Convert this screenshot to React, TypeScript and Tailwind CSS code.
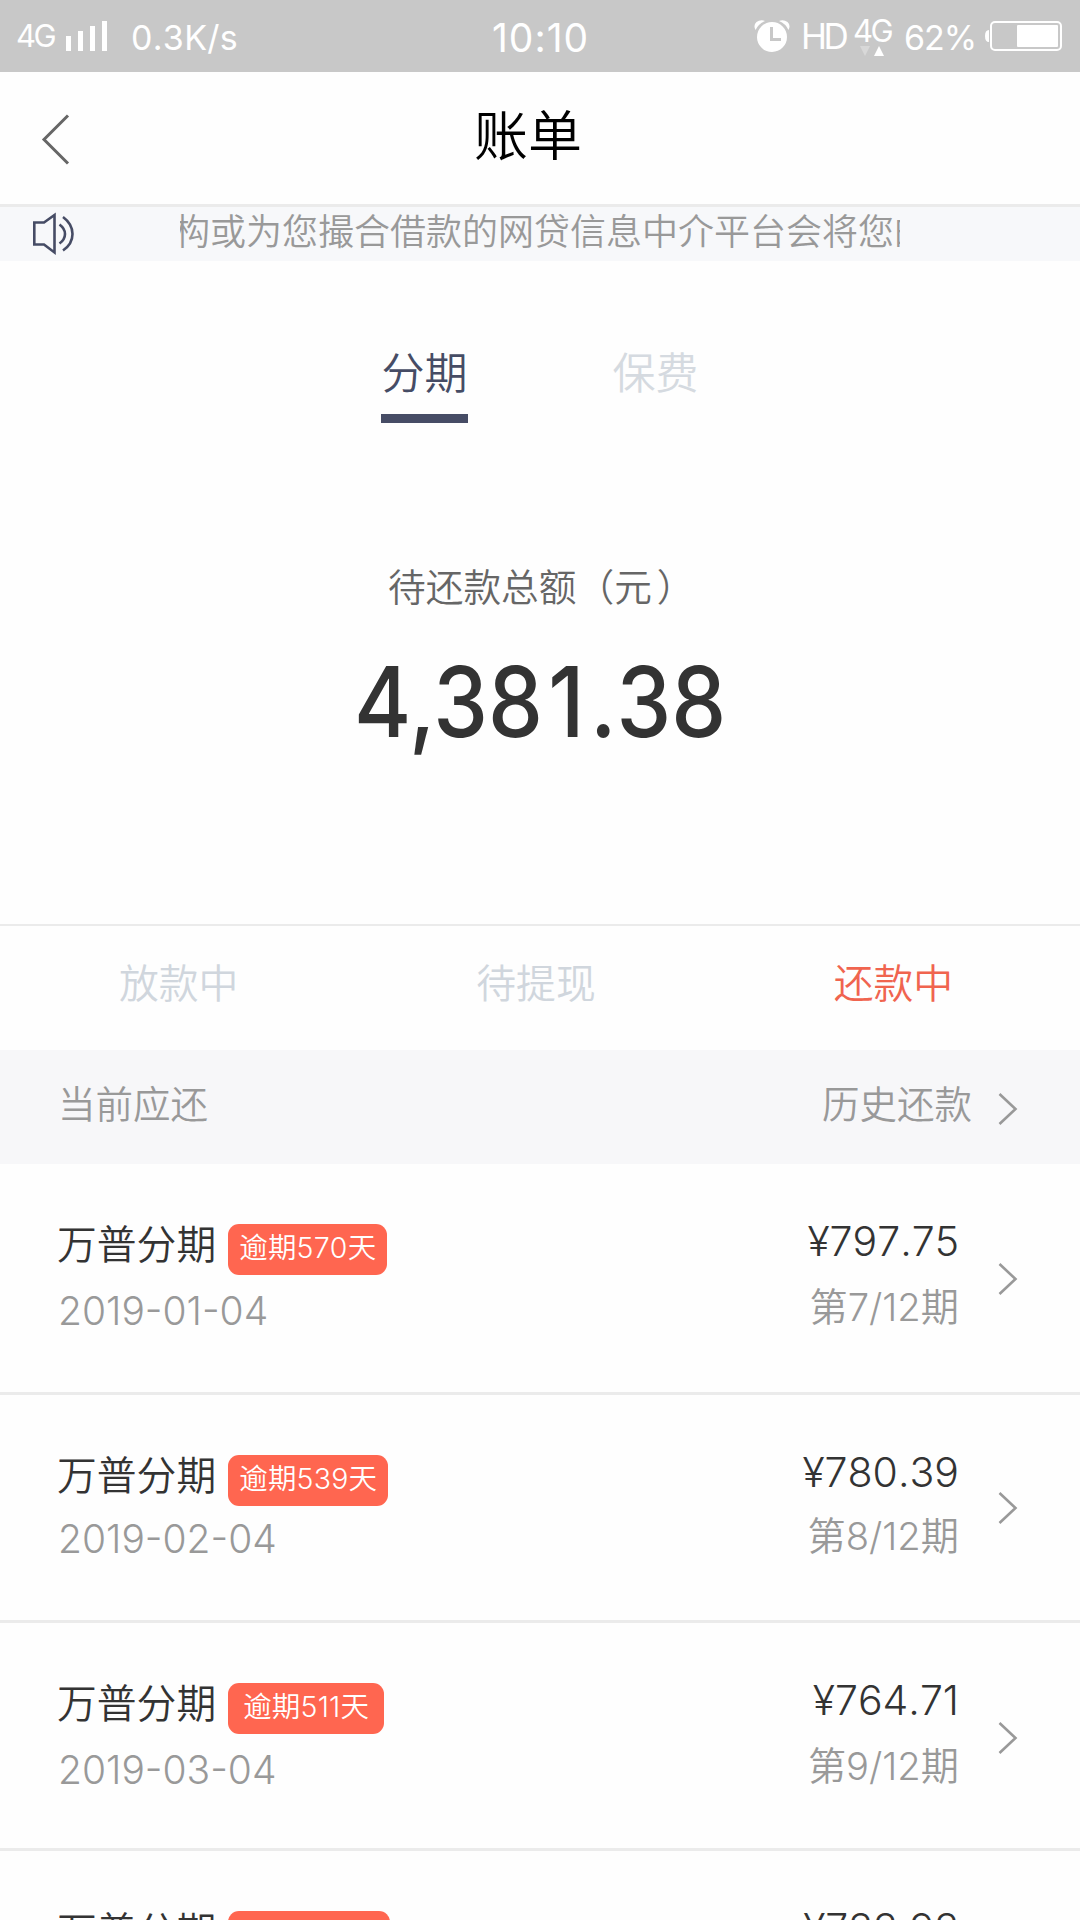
interface Bill {
  id: number;
  name: string;
  overdue: string;
  date: string;
  amount: string;
  period: string;
  // second line sits slightly higher on this row
  tight?: boolean;
}

const bills: Bill[] = [
  { id: 1, name: '万普分期', overdue: '逾期570天', date: '2019-01-04', amount: '¥797.75', period: '第7/12期' },
  { id: 2, name: '万普分期', overdue: '逾期539天', date: '2019-02-04', amount: '¥780.39', period: '第8/12期', tight: true },
  { id: 3, name: '万普分期', overdue: '逾期511天', date: '2019-03-04', amount: '¥764.71', period: '第9/12期' },
  { id: 4, name: '万普分期', overdue: '逾期480天', date: '2019-04-04', amount: '¥733.93', period: '第10/12期' },
];

const statusTabs = [
  { label: '放款中', active: false },
  { label: '待提现', active: false },
  { label: '还款中', active: true },
];

function ArrowRight() {
  return (
    <svg width="20" height="34" viewBox="0 0 20 34" fill="none" className="shrink-0">
      <path d="M1.500 2L17.500 17L1.500 32" stroke="#999999" strokeWidth="2.6" />
    </svg>
  );
}

function StatusBar() {
  return (
    <div className="flex h-[72px] shrink-0 items-start bg-[#c8c8c8] font-normal text-white">
      <span className="ml-[16px] mt-[19px] w-[50px] text-[31px] leading-[33px] tracking-[-2.5px]">4G</span>
      <svg width="42" height="72" viewBox="0 0 42 72" fill="#fff" className="shrink-0">
        <rect x="0" y="36" width="5" height="15" />
        <rect x="12" y="31" width="5" height="20" />
        <rect x="24" y="26" width="5" height="25" />
        <rect x="36" y="21" width="5" height="30" />
      </svg>
      <span className="ml-[23px] mt-[17px] w-[361px] text-[34px] leading-[42px] tracking-[0.3px]">0.3K/s</span>
      <span className="mt-[16px] w-[262px] text-[39px] leading-[44px] tracking-[1px]">10:10</span>
      <svg width="36" height="72" viewBox="0 0 36 72" fill="none" className="shrink-0">
        <circle cx="18" cy="37" r="15" fill="#fff" />
        <path d="M1.500 30Q-1 25 2.500 22Q6.500 19 11 21A17.500 17.500 0 0 0 1.500 30Z" fill="#fff" />
        <path d="M34.500 30Q37 25 33.500 22Q29.500 19 25 21A17.500 17.500 0 0 1 34.500 30Z" fill="#fff" />
        <path d="M17.500 27V39.500H27" stroke="#c8c8c8" strokeWidth="3" />
      </svg>
      <span className="ml-[11px] mt-[18px] w-[52px] text-[35px] leading-[36px] tracking-[-3.5px]">HD</span>
      <div className="flex w-[51px] flex-col">
        <span className="mt-[14px] text-[31px] leading-[33px] tracking-[-2.5px]">4G</span>
        <svg width="38" height="10" viewBox="0 0 38 10" className="-mt-[1px]">
          <path d="M7 0H17L12 10Z" fill="#d8d8d8" />
          <path d="M21 10H31L26 0Z" fill="#fff" />
        </svg>
      </div>
      <span className="mt-[17px] w-[81px] text-[34px] leading-[42px] tracking-[-1px]">62%</span>
      <svg width="78" height="72" viewBox="0 0 78 72" fill="none" className="shrink-0">
        <path d="M4 30V42Q0 42 0 36Q0 30 4 30Z" fill="#fff" />
        <rect x="6" y="22" width="70" height="28" rx="4" stroke="#fff" strokeWidth="2" />
        <rect x="32" y="25" width="41" height="22" rx="1" fill="#fff" />
      </svg>
    </div>
  );
}

function Header() {
  return (
    <header className="flex h-[135px] shrink-0 border-b-[3px] border-[#ebebeb]">
      <svg width="30" height="54" viewBox="0 0 30 54" fill="none" className="ml-[41px] mt-[41px] shrink-0">
        <path d="M27 2.500L3 26.500L27 50.500" stroke="#666" strokeWidth="3" />
      </svg>
      <h1 className="ml-[403px] mt-[27px] text-[54px] leading-[76px] text-black">账单</h1>
    </header>
  );
}

function Notice() {
  return (
    <div className="flex h-[54px] shrink-0 bg-[#f7f8fa]">
      <svg width="44" height="44" viewBox="0 0 44 44" fill="none" stroke="#464c65" strokeWidth="2.600" className="ml-[32px] mt-[5px] shrink-0">
        <path d="M2.300 10.500H12L22.500 3V40.500L12 32.500H2.300Z" />
        <path d="M27.500 12.500Q33 16.500 33 22Q33 27.500 27.500 31.500" />
        <path d="M31 5Q40.500 12 40.500 22Q40.500 32 31 38.500" />
      </svg>
      <div className="ml-[104px] w-[720px] overflow-hidden">
        <p className="-ml-[6px] mt-[1px] whitespace-nowrap text-[36px] leading-[48px] text-[#999]">
          构或为您撮合借款的网贷信息中介平台会将您的
        </p>
      </div>
    </div>
  );
}

function Summary() {
  return (
    <section className="flex h-[665px] shrink-0 flex-col border-b-2 border-[#ebebeb]">
      <div className="ml-[381px] mt-[82px] flex gap-[144px] text-[43px] leading-[60px]">
        <div className="h-[80px] w-[87px] border-b-[9px] border-[#464c65] text-center text-[#464c65]">分期</div>
        <div className="w-[87px] text-center text-[#d5dae0]">保费</div>
      </div>
      <p className="ml-[388px] mt-[138px] text-[37.700px] leading-[52px] text-[#666]">
        待还款总额（元<span className="ml-[5px]">）</span>
      </p>
      <p className="ml-[354px] mt-[31px] origin-left scale-x-90 text-[97px] font-[550] leading-[116px] text-[#333]">
        <span className="tracking-[-2.5px]">4,</span>38<span className="ml-[6px] mr-[6px]">1</span>.38
      </p>
    </section>
  );
}

function BillRow({ bill }: { bill: Bill }) {
  return (
    <li className="flex h-[228px] shrink-0 border-b-[3px] border-[#ebebeb] pl-[57px] first:h-[231px]">
      <div className="flex-1">
        <div className="mt-[60px] flex h-[51px]">
          <span className="-mt-[7px] text-[39.800px] leading-[56px] text-[#333]">{bill.name}</span>
          <span className="ml-[12px] h-[51px] min-w-[156px] rounded-[11px] bg-[#ff6650] px-[11px] text-center text-[28.500px] leading-[48px] tracking-[0.200px] text-white">
            {bill.overdue}
          </span>
        </div>
        <p className={bill.tight ? 'ml-[1px] mt-[9px] text-[39px] font-light leading-[48px] text-[#999]' : 'ml-[1px] mt-[12px] text-[39px] font-light leading-[48px] text-[#999]'}>
          {bill.date}
        </p>
      </div>
      <div className="mr-[39px] text-right">
        <p className="mt-[53px] text-[41px] font-light leading-[48px] text-[#333]">{bill.amount}</p>
        <p className={bill.tight ? 'mt-[14px] text-[38.200px] leading-[52px] text-[#999]' : 'mt-[16px] text-[38.200px] leading-[52px] text-[#999]'}>
          {bill.period}
        </p>
      </div>
      <div className={bill.tight ? 'mr-[62px] mt-[96px]' : 'mr-[62px] mt-[98px]'}>
        <ArrowRight />
      </div>
    </li>
  );
}

export default function App() {
  return (
    <div className="flex h-[1920px] w-[1080px] flex-col overflow-hidden bg-[#fefefe] font-[350] [font-family:Inter,'Noto_Sans_CJK_SC',sans-serif] [font-kerning:none]">
      <StatusBar />
      <Header />
      <Notice />
      <Summary />

      {/* Loan status filter */}
      <nav className="grid h-[124px] w-[1072px] shrink-0 grid-cols-3 text-center text-[39.800px] leading-[56px]">
        {statusTabs.map((tab) => (
          <span key={tab.label} className={tab.active ? 'mt-[30px] text-[#f0644f]' : 'mt-[30px] text-[#d0d6dd]'}>
            {tab.label}
          </span>
        ))}
      </nav>

      <div className="flex h-[114px] shrink-0 items-start bg-[#f7f7f9] text-[37.500px] leading-[52px] text-[#999]">
        <span className="ml-[58px] mt-[29px] flex-1">当前应还</span>
        <span className="mr-[26px] mt-[29px]">历史还款</span>
        <div className="mr-[62px] mt-[42px]">
          <ArrowRight />
        </div>
      </div>

      <ul className="flex flex-col">
        {bills.map((bill) => (
          <BillRow key={bill.id} bill={bill} />
        ))}
      </ul>
    </div>
  );
}
